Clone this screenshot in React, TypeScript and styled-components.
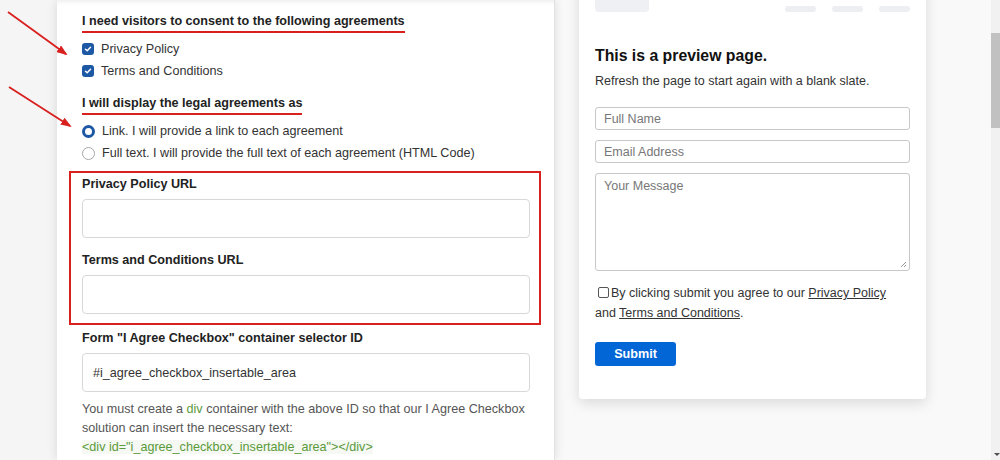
import React from "react";
import styled, { createGlobalStyle } from "styled-components";

const Global = createGlobalStyle`
  html, body { margin: 0; padding: 0; }
  body { font-family: "Liberation Sans", Arial, sans-serif; background: #f9f9f9; }
  * { box-sizing: border-box; }
`;

const Page = styled.div`
  position: relative;
  display: flex;
  width: 1000px;
  height: 460px;
  overflow: hidden;
  background: #f9f9f9;
`;

const Gutter = styled.div`
  width: 57px;
  flex: none;
  background: #f5f5f5;
`;

const LeftPanel = styled.div`
  width: 498px;
  flex: none;
  background: #fff;
  border-right: 1px solid #e2e2e2;
  box-shadow: 0 0 10px rgba(0, 0, 0, 0.12), inset 0 6px 6px -6px rgba(0, 0, 0, 0.12);
  padding: 13px 24px 0 25px;
  font-size: 12.6px;
  color: #333;
  z-index: 1;
`;

const SectionTitle = styled.div`
  display: inline-block;
  font-weight: bold;
  font-size: 12.6px;
  line-height: 16px;
  color: #222;
  padding-bottom: 2px;
  border-bottom: 2px solid #d8201e;
`;

const Block = styled.div<{ $mt?: number }>`
  margin-top: ${(p) => p.$mt ?? 0}px;
`;

const OptionList = styled.div`
  display: flex;
  flex-direction: column;
  gap: 6px;
  margin-top: 8px;
`;

const Option = styled.label`
  display: flex;
  align-items: center;
  gap: 7px;
  height: 16px;
  font-size: 12.6px;
  line-height: 16px;
  color: #333;
`;

const CheckBox = styled.span`
  width: 12px;
  height: 12px;
  border-radius: 3px;
  background: #1d58a5;
  display: inline-flex;
  align-items: center;
  justify-content: center;
  flex: none;
`;

const Radio = styled.span<{ $on?: boolean }>`
  width: 13px;
  height: 13px;
  border-radius: 50%;
  flex: none;
  background: #fff;
  border: ${(p) => (p.$on ? "3.5px solid #1d58a5" : "1px solid #a8a8a8")};
`;

const RedBox = styled.div`
  margin: 10px -11px 0 -13px;
  border: 2px solid #d8201e;
  padding: 3px 9px 9px 11px;
`;

const FieldLabel = styled.div<{ $mt?: number }>`
  font-weight: bold;
  font-size: 12.6px;
  line-height: 16px;
  color: #222;
  margin-top: ${(p) => p.$mt ?? 0}px;
`;

const TextField = styled.div`
  margin-top: 7px;
  height: 39px;
  border: 1px solid #d8d8d8;
  border-radius: 4px;
  background: #fff;
  display: flex;
  align-items: center;
  padding-left: 10px;
  font-size: 12.6px;
  color: #333;
`;

const Help = styled.p`
  margin: 8px 0 0;
  font-size: 12.6px;
  line-height: 19px;
  color: #555;
`;

const Green = styled.span`
  color: #5b9a3b;
`;

const Code = styled.span`
  color: #5b9a3b;
  background: #f5f8f3;
`;

const RightArea = styled.div`
  flex: 1;
  padding-left: 24px;
  background: #f9f9f9;
`;

const Card = styled.div`
  width: 347px;
  margin-top: -20px;
  background: #fff;
  border-radius: 4px;
  box-shadow: 0 4px 14px rgba(0, 0, 0, 0.13);
  padding: 0 16px 33px;
`;

const SkeletonHeader = styled.div`
  display: flex;
  align-items: flex-end;
  justify-content: space-between;
  height: 32px;
`;

const SkeletonLogo = styled.div`
  width: 54px;
  height: 32px;
  border-radius: 4px;
  background: #eef0f3;
`;

const SkeletonNav = styled.div`
  display: flex;
  gap: 16px;
`;

const SkeletonBar = styled.div`
  width: 31px;
  height: 6px;
  border-radius: 3px;
  background: #eceef2;
`;

const PreviewTitle = styled.h2`
  margin: 34px 0 0;
  font-size: 15.8px;
  line-height: 20px;
  font-weight: bold;
  color: #111;
`;

const PreviewText = styled.p`
  margin: 7px 0 0;
  font-size: 12.5px;
  line-height: 17px;
  color: #333;
`;

const PreviewInput = styled.div<{ $mt: number; $h: number }>`
  margin-top: ${(p) => p.$mt}px;
  height: ${(p) => p.$h}px;
  border: 1px solid #c8c8c8;
  border-radius: 3px;
  padding: ${(p) => (p.$h > 30 ? "5px 8px" : "0 8px")};
  display: flex;
  align-items: ${(p) => (p.$h > 30 ? "flex-start" : "center")};
  font-size: 12.5px;
  color: #777;
  position: relative;
`;

const Grip = styled.svg`
  position: absolute;
  right: 2px;
  bottom: 2px;
`;

const Agree = styled.div`
  margin-top: 12px;
  font-size: 12.5px;
  line-height: 20px;
  color: #333;
`;

const SmallBox = styled.span`
  display: inline-block;
  width: 11px;
  height: 11px;
  border: 1px solid #555;
  border-radius: 2px;
  margin: 0 2px 0 3px;
  vertical-align: -1px;
`;

const Link = styled.span`
  text-decoration: underline;
`;

const SubmitButton = styled.button`
  margin-top: 19px;
  width: 81px;
  height: 24px;
  border: none;
  border-radius: 3px;
  background: #0366d6;
  color: #fff;
  font-family: "Liberation Sans", Arial, sans-serif;
  font-weight: bold;
  font-size: 12.6px;
  padding: 0;
`;

const Scrollbar = styled.div`
  width: 9px;
  flex: none;
  background: #f1f1f1;
  display: flex;
  flex-direction: column;
  padding-top: 33px;
`;

const Thumb = styled.div`
  height: 95px;
  background: #c1c1c1;
`;

const ScrollArrow = styled.div`
  margin-top: auto;
  margin-bottom: 4px;
  margin-left: 3px;
  width: 0;
  height: 0;
  border-left: 3px solid transparent;
  border-right: 3px solid transparent;
  border-top: 3px solid #505050;
`;

const Arrows = styled.svg`
  position: absolute;
  left: 0;
  top: 0;
  pointer-events: none;
  z-index: 2;
`;

const Check = () => (
  <svg width="8" height="8" viewBox="0 0 8 8">
    <path d="M1.5 4.2 L3.2 5.8 L6.5 2.3" stroke="#fff" strokeWidth="1.5" fill="none" strokeLinecap="round" strokeLinejoin="round" />
  </svg>
);

export default function App() {
  return (
    <>
      <Global />
      <Page>
        <Gutter />
        <LeftPanel>
          <SectionTitle>I need visitors to consent to the following agreements</SectionTitle>
          <OptionList>
            <Option>
              <CheckBox><Check /></CheckBox>Privacy Policy
            </Option>
            <Option>
              <CheckBox><Check /></CheckBox>Terms and Conditions
            </Option>
          </OptionList>
          <Block $mt={16}>
            <SectionTitle>I will display the legal agreements as</SectionTitle>
          </Block>
          <OptionList>
            <Option>
              <Radio $on />Link. I will provide a link to each agreement
            </Option>
            <Option>
              <Radio />Full text. I will provide the full text of each agreement (HTML Code)
            </Option>
          </OptionList>
          <RedBox>
            <FieldLabel>Privacy Policy URL</FieldLabel>
            <TextField />
            <FieldLabel $mt={14}>Terms and Conditions URL</FieldLabel>
            <TextField />
          </RedBox>
          <FieldLabel $mt={5}>Form "I Agree Checkbox" container selector ID</FieldLabel>
          <TextField>#i_agree_checkbox_insertable_area</TextField>
          <Help>
            You must create a <Green>div</Green> container with the above ID so that our I Agree Checkbox
            solution can insert the necessary text:
            <br />
            <Code>&lt;div id="i_agree_checkbox_insertable_area"&gt;&lt;/div&gt;</Code>
          </Help>
        </LeftPanel>
        <RightArea>
          <Card>
            <SkeletonHeader>
              <SkeletonLogo />
              <SkeletonNav>
                <SkeletonBar />
                <SkeletonBar />
                <SkeletonBar />
              </SkeletonNav>
            </SkeletonHeader>
            <PreviewTitle>This is a preview page.</PreviewTitle>
            <PreviewText>Refresh the page to start again with a blank slate.</PreviewText>
            <PreviewInput $mt={17} $h={23}>Full Name</PreviewInput>
            <PreviewInput $mt={10} $h={23}>Email Address</PreviewInput>
            <PreviewInput $mt={10} $h={98}>
              Your Message
              <Grip width="8" height="8" viewBox="0 0 8 8">
                <path d="M7 2 L2 7 M7 5 L5 7" stroke="#999" strokeWidth="1" />
              </Grip>
            </PreviewInput>
            <Agree>
              <SmallBox />By clicking submit you agree to our <Link>Privacy Policy</Link>
              <br />
              and <Link>Terms and Conditions</Link>.
            </Agree>
            <SubmitButton>Submit</SubmitButton>
          </Card>
        </RightArea>
        <Scrollbar>
          <Thumb />
          <ScrollArrow />
        </Scrollbar>
        <Arrows width="80" height="140" viewBox="0 0 80 140">
          <defs>
            <marker id="ah" markerWidth="11" markerHeight="8" refX="9" refY="4" orient="auto" markerUnits="userSpaceOnUse">
              <path d="M0 0 L11 4 L0 8 Z" fill="#d8201e" />
            </marker>
          </defs>
          <line x1="8" y1="12" x2="66" y2="54" stroke="#d8201e" strokeWidth="1.8" markerEnd="url(#ah)" />
          <line x1="9" y1="87" x2="70" y2="126" stroke="#d8201e" strokeWidth="1.8" markerEnd="url(#ah)" />
        </Arrows>
      </Page>
    </>
  );
}
